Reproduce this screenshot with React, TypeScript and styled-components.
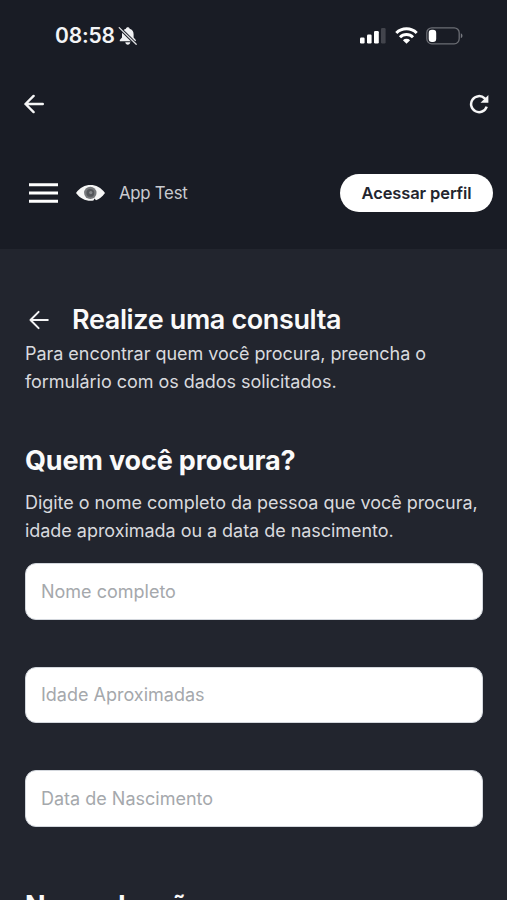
import React from 'react';
import styled, { createGlobalStyle } from 'styled-components';

const GlobalStyle = createGlobalStyle`
  *, *::before, *::after { box-sizing: border-box; }
  html, body { margin: 0; height: 100%; overflow: hidden; }
  body { background: #22252e; font-family: Inter, 'Liberation Sans', sans-serif; color: #fff; }
  button { font: inherit; color: inherit; border: 0; padding: 0; background: none; }
  h1, h2, p { margin: 0; }
  svg { display: block; flex: none; }
`;

const Screen = styled.div`
  width: 507px;
  height: 900px;
  overflow: hidden;
`;

const Header = styled.header`
  height: 249px;
  background: #191c25;
`;

const StatusBar = styled.div`
  display: flex;
  justify-content: space-between;
  align-items: center;
  height: 71px;
  padding: 0 44px 0 55px;
`;

const Clock = styled.div`
  display: flex;
  align-items: center;
  gap: 3px;
  font-size: 21px;
  font-weight: 600;
  letter-spacing: -0.2px;
  color: #f3f4f6;
`;

const Indicators = styled.div`
  display: flex;
  align-items: center;
  gap: 8.5px;
`;

const BrowserBar = styled.div`
  display: flex;
  justify-content: space-between;
  align-items: center;
  height: 65px;
  padding: 0 18px 0 24px;
`;

const AppBar = styled.div`
  display: flex;
  align-items: center;
  height: 113px;
  padding: 0 14px 0 29px;
`;

const IconButton = styled.button`
  display: flex;
  align-items: center;
  justify-content: center;
`;

const Brand = styled.div`
  display: flex;
  align-items: center;
  flex: 1;
  gap: 14px;
  margin-left: 18px;
  font-size: 16.8px;
  letter-spacing: -0.25px;
  color: #c9cbd0;
`;

const ProfileButton = styled.button`
  width: 153px;
  height: 38px;
  border-radius: 19px;
  background: #fff;
  color: #23252e;
  font-size: 16.5px;
  font-weight: 600;
  letter-spacing: -0.12px;
`;

const Content = styled.main`
  padding: 54px 24px 0 25px;
`;

const TitleRow = styled.div`
  display: flex;
  align-items: center;
  gap: 23px;
  height: 34px;
  margin-bottom: 3px;
  padding-left: 4px;
`;

const Heading = styled.h2<{ $weight: number; $tracking: number }>`
  font-size: 27px;
  line-height: 34px;
  font-weight: ${(p) => p.$weight};
  letter-spacing: ${(p) => p.$tracking}px;
  color: #fafafa;
  white-space: nowrap;
`;

const Paragraph = styled.p`
  font-size: 18px;
  line-height: 28px;
  letter-spacing: -0.04px;
  color: #d9dade;
`;

const Line = styled.span`
  display: block;
  white-space: nowrap;
`;

const Intro = styled.section`
  height: 141px;
`;

const Section = styled.section`
  display: flex;
  flex-direction: column;
  gap: 11px;
`;

const Fields = styled.div`
  display: grid;
  gap: 47px;
  margin: 18px 0 62.5px;
`;

const Field = styled.input`
  display: block;
  width: 100%;
  height: 56.5px;
  padding: 0 15px;
  border: 1px solid #d3d7dd;
  border-radius: 11px;
  background: #fff;
  font: 400 18px Inter, 'Liberation Sans', sans-serif;
  outline: none;
  &::placeholder { color: #a5a8ac; opacity: 1; }
`;

const MutedBell = () => (
  <svg width="20" height="20" viewBox="0 0 20 20">
    <path d="M9.800 1.300c-1 0-1.700.6-1.800 1.400C5.300 3.500 4 5.500 4 8.200v3.200L1.800 14v1.200h16V14l-2.200-2.600V8.200c0-2.700-1.300-4.700-4-5.500-.1-.8-.8-1.400-1.800-1.400Z" fill="#f0f1f3" />
    <path d="M7.300 16.200h5c-.2 1.500-1.200 2.500-2.500 2.500s-2.300-1-2.500-2.500Z" fill="#f0f1f3" />
    <path d="M1.200 1.600 18.200 18.300" stroke="#191c25" strokeWidth="3.200" />
    <path d="M1.200 1.600 18.200 18.300" stroke="#dfe0e3" strokeWidth="1.300" strokeLinecap="round" />
  </svg>
);

const Signal = () => (
  <svg width="26" height="17" viewBox="0 0 26 17">
    <rect x="0" y="10.500" width="4.600" height="6" rx="1.200" fill="#fff" />
    <rect x="7" y="7.500" width="4.600" height="9" rx="1.200" fill="#fff" />
    <rect x="14" y="4" width="4.800" height="12.500" rx="1.200" fill="#fff" />
    <rect x="21" y="1" width="4.600" height="15.500" rx="1.200" fill="#42444c" />
  </svg>
);

const Wifi = () => (
  <svg width="23" height="17" viewBox="0 0 23 17" fill="none" stroke="#fff" strokeWidth="3">
    <path d="M1.300 6a14.500 14.500 0 0 1 20.400 0" />
    <path d="M5 10.200a9.200 9.200 0 0 1 13 0" />
    <path d="M11.500 16.800 7.900 13.200a5.100 5.100 0 0 1 7.200 0Z" fill="#fff" stroke="none" />
  </svg>
);

const Battery = () => (
  <svg width="37" height="18" viewBox="0 0 37 18">
    <rect x=".8" y=".8" width="32.400" height="16" rx="5" fill="none" stroke="#6b6d74" strokeWidth="1.300" />
    <rect x="2.700" y="2.700" width="7.500" height="12.200" rx="3.200" fill="#fff" />
    <path d="M34.800 6.300c2.200.8 2.200 4.200 0 5Z" fill="#777980" />
  </svg>
);

const BackArrow = ({ width }: { width: number }) => (
  <svg width="20" height="20" viewBox="0 0 20 20" fill="none" stroke="#f5f5f6" strokeWidth={width} strokeLinecap="round" strokeLinejoin="round">
    <path d="M18.800 10H1.500M9.600 1.900 1.500 10l8.100 8.100" />
  </svg>
);

const Reload = () => (
  <svg width="20" height="20" viewBox="0 0 20 20" fill="none" stroke="#f5f5f6" strokeWidth="2.500">
    <path d="M17.700 12.600a8 8 0 1 1-2-8.200l1.800 1.900" />
    <path d="M19.400.9v7.900h-7.900Z" fill="#f5f5f6" stroke="none" />
  </svg>
);

const Menu = () => (
  <svg width="29" height="20" viewBox="0 0 29 20" fill="none" stroke="#fff" strokeWidth="3">
    <path d="M0 1.800h29M0 10h29M0 18.200h29" />
  </svg>
);

const Eye = () => (
  <svg width="29" height="18" viewBox="0 0 29 18">
    <path d="M0 9C4 3.500 9 1 14.500 1S25 3.500 29 9c-3 4-6 6.200-9 7.200l-1.500-1.700-1 2.100c-7 .9-13-1.600-17.500-7.600Z" fill="#f6f6f6" />
    <circle cx="14.300" cy="8.900" r="6.200" fill="#77797c" />
    <circle cx="14.300" cy="8.900" r="3.900" fill="#54565a" />
    <circle cx="14.800" cy="8.600" r="1.600" fill="#85878a" />
  </svg>
);

export default function App() {
  return (
    <>
      <GlobalStyle />
      <Screen>
        <Header>
          <StatusBar>
            <Clock>08:58<MutedBell /></Clock>
            <Indicators><Signal /><Wifi /><Battery /></Indicators>
          </StatusBar>
          <BrowserBar>
            <IconButton aria-label="Voltar"><BackArrow width={2.4} /></IconButton>
            <IconButton aria-label="Recarregar"><Reload /></IconButton>
          </BrowserBar>
          <AppBar>
            <IconButton aria-label="Menu"><Menu /></IconButton>
            <Brand><Eye /><span>App Test</span></Brand>
            <ProfileButton>Acessar perfil</ProfileButton>
          </AppBar>
        </Header>
        <Content>
          <Intro>
            <TitleRow>
              <IconButton aria-label="Voltar"><BackArrow width={2} /></IconButton>
              <Heading as="h1" $weight={600} $tracking={-0.37}>Realize uma consulta</Heading>
            </TitleRow>
            <Paragraph>
              <Line>Para encontrar quem você procura, preencha o</Line>
              <Line>formulário com os dados solicitados.</Line>
            </Paragraph>
          </Intro>
          <Section>
            <Heading $weight={700} $tracking={-0.17}>Quem você procura?</Heading>
            <Paragraph>
              <Line>Digite o nome completo da pessoa que você procura,</Line>
              <Line>idade aproximada ou a data de nascimento.</Line>
            </Paragraph>
          </Section>
          <Fields>
            <Field placeholder="Nome completo" />
            <Field placeholder="Idade Aproximadas" />
            <Field placeholder="Data de Nascimento" />
          </Fields>
          <Heading $weight={700} $tracking={-0.17}>Nome da mãe</Heading>
        </Content>
      </Screen>
    </>
  );
}
